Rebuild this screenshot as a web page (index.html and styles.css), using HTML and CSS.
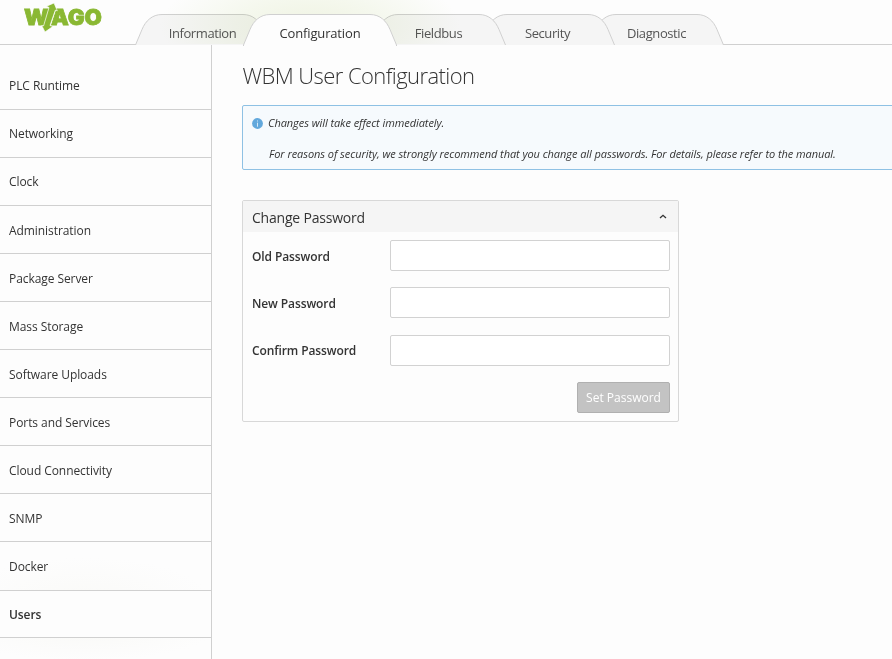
FILE: index.html
```html
<!DOCTYPE html>
<html lang="en">
<head>
<meta charset="utf-8">
<title>WBM User Configuration</title>
<link rel="stylesheet" href="styles.css">
</head>
<body>
<header class="header">
  <svg class="logo" width="80" height="30" viewBox="0 0 80 30" role="img" aria-label="WAGO">
    <text class="logo-text" x="0" y="21.600" textLength="25" lengthAdjust="spacingAndGlyphs">W</text>
    <text class="logo-text" x="27" y="21.600" textLength="51" lengthAdjust="spacingAndGlyphs">AGO</text>
    <path class="logo-arrow" d="M22.500 3.200 30 0 33.300 7.800 31.300 7.200 26 22.500 28.800 23.500 21 29 17.700 22.500 19.600 22.800 25 4.500Z"/>
  </svg>
  <nav class="tabs">
    <a class="tab first"><svg class="shape" width="135" height="31"><path d="M.5 31 7 15.500C10.500 7 17 .5 27 .5H108C118 .5 124.500 7 128 15.500L134.500 31"/></svg><span>Information</span></a>
    <a class="tab active"><svg class="shape" width="154" height="32"><path d="M.5 32V31L7 15.500C10.500 7 17 .5 27 .5H127C137 .5 143.500 7 147 15.500L153.500 31V32"/></svg><span>Configuration</span></a>
    <a class="tab third"><svg class="shape" width="135" height="31"><path d="M.5 31 7 15.500C10.500 7 17 .5 27 .5H108C118 .5 124.500 7 128 15.500L134.500 31"/></svg><span>Fieldbus</span></a>
    <a class="tab fourth"><svg class="shape" width="135" height="31"><path d="M.5 31 7 15.500C10.500 7 17 .5 27 .5H108C118 .5 124.500 7 128 15.500L134.500 31"/></svg><span>Security</span></a>
    <a class="tab"><svg class="shape" width="135" height="31"><path d="M.5 31 7 15.500C10.500 7 17 .5 27 .5H108C118 .5 124.500 7 128 15.500L134.500 31"/></svg><span>Diagnostic</span></a>
  </nav>
</header>
<div class="body">
  <aside class="sidebar">
    <a class="item">PLC Runtime</a>
    <a class="item">Networking</a>
    <a class="item">Clock</a>
    <a class="item">Administration</a>
    <a class="item">Package Server</a>
    <a class="item">Mass Storage</a>
    <a class="item">Software Uploads</a>
    <a class="item">Ports and Services</a>
    <a class="item">Cloud Connectivity</a>
    <a class="item">SNMP</a>
    <a class="item glow">Docker</a>
    <a class="item current">Users</a>
    <div class="rest"></div>
  </aside>
  <main class="main">
    <h1>WBM User Configuration</h1>
    <div class="notice">
      <svg class="info" width="11" height="11" viewBox="0 0 11 11"><circle cx="5.500" cy="5.500" r="5.400" fill="#62a8dc"/><path d="M5.500 2.500v1M5.500 4.700v4" stroke="#d5e8f6" stroke-width="1"/></svg>
      <div>
        <p class="line-a">Changes will take effect immediately.</p>
        <p class="line-b">For reasons of security, we strongly recommend that you change all passwords. For details, please refer to the manual.</p>
      </div>
    </div>
    <section class="panel">
      <div class="panel-head"><h2>Change Password</h2>
        <svg width="8" height="5" viewBox="0 0 8 5"><path d="M1 4 4 1.300 7 4" fill="none" stroke="#333" stroke-width="1.300"/></svg>
      </div>
      <form class="form">
        <label class="field"><span>Old Password</span><input type="password"></label>
        <label class="field"><span>New Password</span><input type="password"></label>
        <label class="field"><span>Confirm Password</span><input type="password"></label>
        <div class="actions"><button type="button" disabled>Set Password</button></div>
      </form>
    </section>
  </main>
</div>
</body>
</html>
```
FILE: styles.css
```css
* { box-sizing: border-box; }
body {
  margin: 0;
  height: 659px;
  display: flex;
  flex-direction: column;
  overflow: hidden;
  background: #fdfdfd;
  color: #333;
  font: 12px/18px "Open Sans", sans-serif;
}
h1, h2, p { margin: 0; font-weight: 400; }

.header {
  position: relative;
  flex: none;
  height: 45px;
  display: flex;
  align-items: flex-start;
  border-bottom: 1px solid #d0d0d0;
}
.header::before {
  content: "";
  position: absolute;
  inset: 0;
  z-index: 4;
  mix-blend-mode: multiply;
  background: radial-gradient(ellipse 150px 60px at 310px 26px, #f1f5e4, #f7faf0 50%, #fff);
}
.logo { flex: none; margin: 3px 0 0 24px; }
.logo-text { font: 900 21.500px Inter, sans-serif; fill: #8ab833; stroke: #8ab833; stroke-width: .8px; }
.logo-arrow { fill: #8ab833; stroke: #fdfdfd; stroke-width: .7px; }
.tabs { display: flex; margin: 14px 0 0 31px; }
.tab {
  position: relative;
  flex: none;
  width: 135px;
  height: 31px;
  padding-top: 10px;
  text-align: center;
  font-size: 13px;
  letter-spacing: -.4px;
  color: #555;
}
.tab + .tab { margin-left: -26px; }
.tab span { position: relative; }
.tab.first, .tab.third { z-index: 3; }
.tab.fourth { z-index: 2; }
.tab.first + .tab.active {
  z-index: 5;
  width: 154px;
  margin-left: -27px;
  letter-spacing: -.15px;
  color: #333;
}
.shape { position: absolute; left: 0; top: 0; display: block; fill: #f5f5f5; stroke: #d0d0d0; }
.active .shape { fill: #fdfdfd; }

.body { flex: 1; display: flex; min-height: 0; }
.sidebar {
  flex: none;
  width: 212px;
  padding-top: 17px;
  display: flex;
  flex-direction: column;
  border-right: 1px solid #d0d0d0;
  letter-spacing: -.07px;
}
.item {
  flex: none;
  height: 48.060px;
  padding: 15.400px 9px 0;
  border-bottom: 1px solid #d0d0d0;
}
.glow { background: radial-gradient(ellipse 125px 42px at 85px 57px, #fafaf8, #fdfdfd); }
.current { font-weight: 600; height: 47px; }
.rest { flex: 1; background: radial-gradient(ellipse 125px 25px at 85px -3px, #fafaf8, #fdfdfd); }

.main { flex: 1; min-width: 0; padding: 16px 0 0 30.500px; }
h1 { font-size: 22px; line-height: 29px; font-weight: 300; letter-spacing: -.57px; }
.notice {
  display: flex;
  gap: 5px;
  width: 660px;
  height: 65px;
  margin-top: 15px;
  margin-left: -.5px;
  padding: 8px 9px;
  border: 1px solid #8ec1e4;
  border-radius: 2px;
  background: #f6fafd;
  font-size: 11px;
  font-style: italic;
  letter-spacing: -.063px;
}
.info { flex: none; margin-top: 4px; }
.line-b { margin: 13px 0 0 1px; white-space: nowrap; }
.panel {
  width: 437px;
  height: 222px;
  margin-top: 30px;
  margin-left: -.5px;
  border: 1px solid #d8d8d8;
  border-radius: 2px;
}
.panel-head {
  display: flex;
  align-items: center;
  justify-content: space-between;
  height: 31px;
  padding: 0 11px 0 9px;
  background: #f5f5f5;
}
h2 { padding-top: 2px; font-size: 14px; line-height: 20px; letter-spacing: -.2px; }
.form { display: flex; flex-direction: column; gap: 16.300px; padding: 8px 8px 0 9px; }
.field { display: flex; align-items: center; justify-content: space-between; font-weight: 600; }
.field span { padding-top: 2px; letter-spacing: -.1px; }
input {
  width: 280px;
  height: 31px;
  border: 1px solid #d2d2d2;
  border-radius: 2px;
  background: #fff;
}
.actions { display: flex; justify-content: flex-end; }
button {
  width: 93px;
  height: 31px;
  padding: 0;
  border: 1px solid #b0b0b0;
  border-radius: 2px;
  background: #c3c3c3;
  color: #fff;
  font: 12px "Open Sans", sans-serif;
}
```
